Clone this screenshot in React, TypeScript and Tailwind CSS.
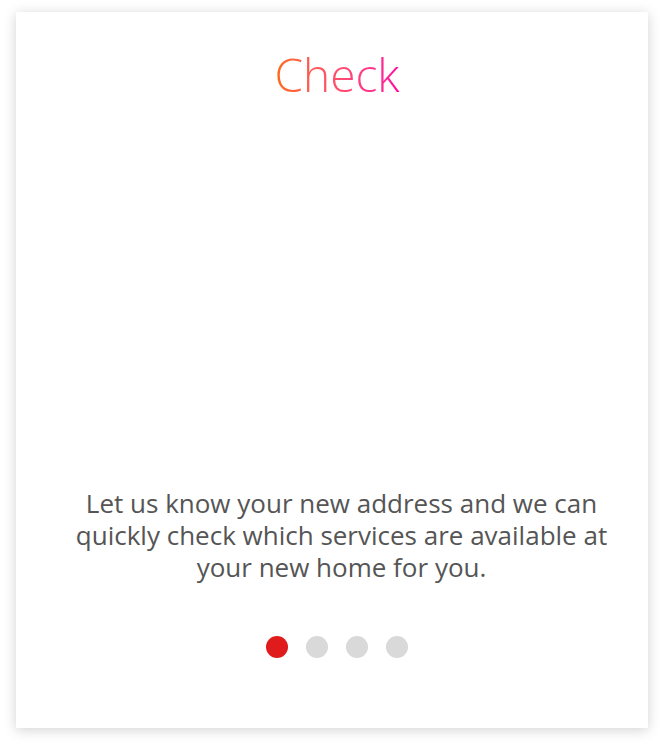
import React from "react";

const dots = [true, false, false, false];

const App = () => {
    return (
        <div className="w-[664px] h-[748px] bg-white pt-3 px-4" style={{ fontFamily: '"Open Sans", sans-serif' }}>
            <div className="w-[632px] h-[716px] bg-white shadow-[0_2px_12px_rgba(0,0,0,0.18)] flex flex-col items-center pl-[10px]">
                <h1 className="mt-[32px] text-[46px] leading-[60px] font-light bg-gradient-to-r from-[#ff6a00] to-[#ff00a0] bg-clip-text text-transparent">
                    Check
                </h1>
                <div className="flex-1" />
                <p className="w-[560px] ml-[9px] text-center text-[26px] leading-[32px] text-[#555555]">
                    Let us know your new address and we can quickly check which services are available at your new home for you.
                </p>
                <div className="mt-[53px] mb-[70px] flex gap-[18px]">
                    {dots.map((active, i) => (
                        <span key={i} className={`w-[22px] h-[22px] rounded-full ${active ? "bg-[#e01b1b]" : "bg-[#d9d9d9]"}`} />
                    ))}
                </div>
            </div>
        </div>
    );
};

export default App;
